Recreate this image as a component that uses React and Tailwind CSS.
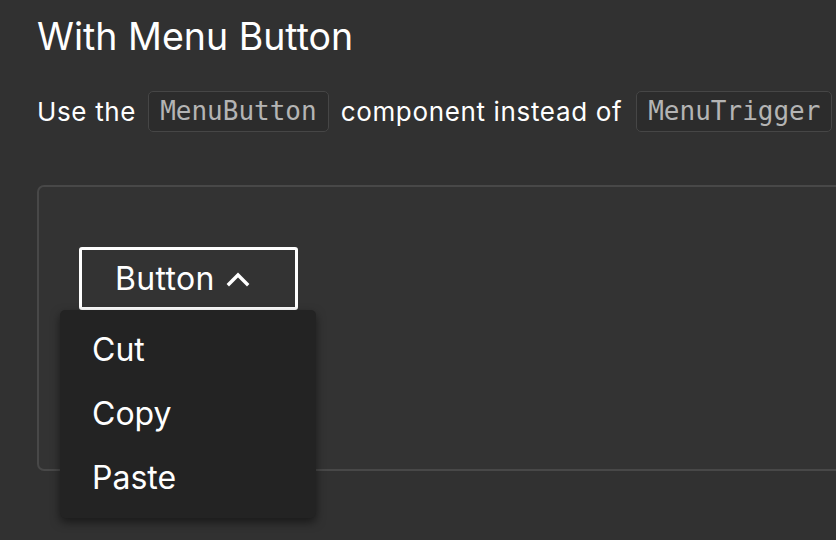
export default function App() {
  return (
    <div className="w-[836px] h-[540px] overflow-hidden bg-[#313131]" style={{ fontFamily: "Inter, 'Noto Sans', sans-serif" }}>
      <div className="pl-[37px] pt-[14px]">
        <h2 className="text-[37.5px] leading-[46px] text-white font-normal whitespace-nowrap">With Menu Button</h2>
        <p className="mt-[31px] flex items-center whitespace-nowrap text-[26px] tracking-[0.65px] text-white">
          <span>Use the</span>
          <code className="ml-[12px] mr-[12px] px-[11px] h-[41px] flex items-center rounded-[5px] border border-[#464646] bg-[#2c2c2c] text-[#b4b4b4] text-[26px] tracking-normal" style={{ fontFamily: "'DejaVu Sans Mono', monospace" }}>MenuButton</code>
          <span>component instead of</span>
          <code className="ml-[14px] px-[11px] h-[41px] flex items-center rounded-[5px] border border-[#464646] bg-[#2c2c2c] text-[#b4b4b4] text-[26px] tracking-normal" style={{ fontFamily: "'DejaVu Sans Mono', monospace" }}>MenuTrigger</code>
        </p>
        <div className="mt-[53px] h-[286px] w-[900px] rounded-[7px] border-2 border-[#484848] bg-[#333333] pl-[40px] pt-[60px] relative">
          <button className="w-[219px] h-[63px] rounded-[3px] border-[3px] border-white flex items-center justify-start pl-[33px] gap-[11px] text-white text-[32px] tracking-[0.3px]">
            <span>Button</span>
            <svg width="24" height="17" viewBox="0 0 24 17" fill="none" stroke="white" strokeWidth="3.4" strokeLinecap="square">
              <path d="M3 14 L12 5 L21 14" />
            </svg>
          </button>
          <div className="absolute left-[21px] top-[123px] w-[256px] h-[208px] rounded-[5px] bg-[#232323] shadow-[0_4px_10px_rgba(0,0,0,0.5)] pt-[8px] z-10">
            {["Cut", "Copy", "Paste"].map((t) => (
              <div key={t} className="h-[64px] flex items-center pl-[32px] text-[32px] text-white">{t}</div>
            ))}
          </div>
        </div>
      </div>
    </div>
  );
}
